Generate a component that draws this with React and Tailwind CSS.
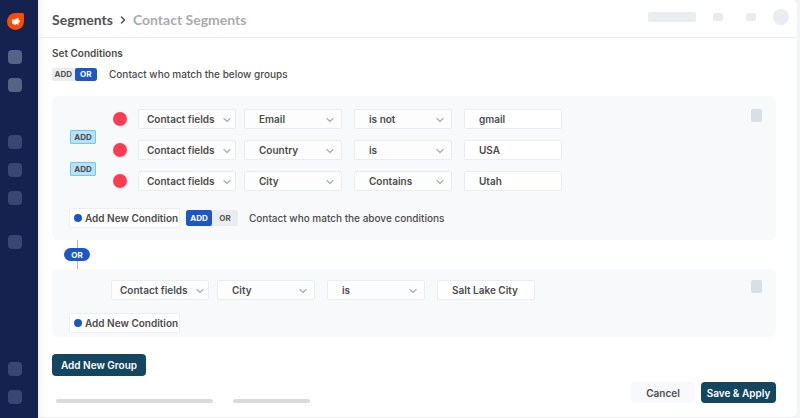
import { ChevronDown, ChevronRight } from "lucide-react"
import clsx from "clsx"

const conditions = [
  { field: "Email", operator: "is not", value: "gmail" },
  { field: "Country", operator: "is", value: "USA" },
  { field: "City", operator: "Contains", value: "Utah" },
]

function Logo() {
  return (
    <svg viewBox="0 0 17 17" className="w-[17px] h-[17px]" aria-hidden="true">
      <path d="M8.5 0H15.5Q17 0 17 1.5V8.5A8.5 8.5 0 1 1 8.5 0Z" fill="#fc4c02" />
      <path
        d="M5 6.6H8L11.4 4.6V6.9L12.9 7.6V9.2L11.4 9.8V12L8.9 10.8V11.8H6.9L6.4 10.4H5Z"
        fill="#fff"
      />
    </svg>
  )
}

function NavItem({ active }) {
  return (
    <a
      href="#"
      aria-label="Navigation item"
      className={clsx("block w-3.5 h-3.5 rounded-sm", active ? "bg-[#566286]" : "bg-[#384670]")}
    />
  )
}

function Sidebar() {
  return (
    <nav className="w-[38px] shrink-0 bg-[#15224f] flex flex-col justify-between pt-[13px] pb-3.5 pl-2">
      <div className="flex flex-col">
        <div className="-ml-px">
          <Logo />
        </div>
        <div className="mt-5 flex flex-col gap-3.5">
          <NavItem active />
          <NavItem active />
        </div>
        <div className="mt-[43px] flex flex-col gap-3.5">
          <NavItem />
          <NavItem />
          <NavItem />
        </div>
        <div className="mt-[30px]">
          <NavItem />
        </div>
      </div>
      <div className="flex flex-col gap-3.5">
        <NavItem />
        <NavItem />
      </div>
    </nav>
  )
}

function Header() {
  return (
    <header className="h-[38px] border-b border-[#e8eaec] flex items-center justify-between pl-3.5 pr-2">
      <div className="flex items-center pt-0.5 font-['Lato',sans-serif] text-sm font-bold">
        <a href="#" className="text-[#505050]">Segments</a>
        <ChevronRight className="w-3 h-3 mx-1 text-[#505050]" strokeWidth={3} />
        <span className="text-[#ababab]">Contact Segments</span>
      </div>
      <div className="flex items-center -mt-1">
        <div className="w-12 h-2.5 rounded-xs bg-[#e9edf0]" />
        <div className="ml-[17px] w-2.5 h-2 rounded-xs bg-[#ebebeb]" />
        <div className="ml-[23px] w-2.5 h-2 rounded-xs bg-[#ebebeb]" />
        <div className="ml-[17px] w-4 h-4 rounded-full bg-[#e9edf0]" />
      </div>
    </header>
  )
}

function Toggle({ selected, className }) {
  return (
    <div className={clsx("flex bg-[#e9edf0] rounded-xs overflow-hidden text-[8px] leading-3 font-bold", className)}>
      {["ADD", "OR"].map((option) => (
        <button
          key={option}
          type="button"
          aria-pressed={option === selected}
          className={clsx(
            "flex-1",
            option === selected ? "bg-[#1d57c5] text-white rounded-xs" : "text-[#555]",
          )}
        >
          {option}
        </button>
      ))}
    </div>
  )
}

function Select({ label, value, first }) {
  return (
    <div className="relative w-[98px] h-5">
      <select
        aria-label={label}
        defaultValue={value}
        className={clsx(
          "appearance-none w-full h-full bg-[#fdfdfd] border border-[#e9edf0] rounded-xs",
          first ? "pl-2" : "pl-3.5",
        )}
      >
        <option>{value}</option>
      </select>
      <ChevronDown
        className={clsx(
          "absolute top-[5px] w-3 h-3 text-[#b0b0b0] pointer-events-none",
          first ? "right-[3px]" : "right-1.5",
        )}
        strokeWidth={2.5}
      />
    </div>
  )
}

function Condition({ field, operator, value }) {
  return (
    <div className="flex items-center gap-3">
      <div className="flex gap-2">
        <Select label="Source" value="Contact fields" first />
        <Select label="Field" value={field} />
      </div>
      <Select label="Operator" value={operator} />
      <input
        aria-label="Value"
        defaultValue={value}
        className="w-[98px] h-5 bg-white border border-[#e9edf0] rounded-xs pl-3.5"
      />
    </div>
  )
}

function JoinBadge() {
  return (
    <button
      type="button"
      className="w-[26px] h-3.5 flex items-center justify-center bg-[#bce0fa] border border-[#69cdf3] rounded-[1px] text-[8px] font-bold"
    >
      ADD
    </button>
  )
}

function AddCondition() {
  return (
    <button
      type="button"
      className="w-[111px] h-5 flex items-center gap-[3px] pl-1 bg-white border border-[#eceff1] rounded-xs whitespace-nowrap"
    >
      <span className="w-2 h-2 shrink-0 rounded-full bg-[#1d57c5]" />
      Add New Condition
    </button>
  )
}

function DeleteButton() {
  return <button type="button" aria-label="Delete group" className="w-[11px] h-[13px] rounded-xs bg-[#d9dfe6]" />
}

export default function App() {
  return (
    <div className="min-h-screen flex bg-[#f3f4f5] font-['Inter',sans-serif] text-[10px] leading-4 font-semibold text-[#4c4c4c]">
      <Sidebar />
      <div className="flex-1 min-w-0 mr-[3px] bg-white border-b border-[#eeeeee] rounded-r-md shadow-[inset_10px_0_8px_-8px_#00000012]">
        <Header />
        <main className="pl-3.5 pr-[21px]">
          <h1 className="pt-[7px]">Set Conditions</h1>
          <div className="mt-[5px] flex items-center gap-3">
            <Toggle selected="OR" className="w-[45px] h-[13px]" />
            <p className="font-medium">Contact who match the below groups</p>
          </div>

          <section className="mt-3.5 h-36 rounded-md bg-[#f8f9fb] pt-[13px] pl-[17px] pr-3.5">
            <div className="flex items-start">
              <div className="flex flex-col gap-[18px] pt-[21px] pl-px">
                <JoinBadge />
                <JoinBadge />
              </div>
              <div className="ml-[17px] flex flex-col gap-[11px]">
                {conditions.map((condition) => (
                  <div key={condition.field} className="flex items-center gap-[11px]">
                    <span className="w-3.5 h-3.5 rounded-full bg-[#ff3b52]" />
                    <Condition {...condition} />
                  </div>
                ))}
              </div>
              <div className="ml-auto">
                <DeleteButton />
              </div>
            </div>
            <div className="mt-[17px] flex items-center">
              <AddCondition />
              <Toggle selected="ADD" className="ml-1.5 w-[52px] h-4" />
              <p className="ml-[11px] font-medium">Contact who match the above conditions</p>
            </div>
          </section>

          <div className="ml-3 w-[26px] flex flex-col items-center">
            <span className="w-px h-2 bg-[#b5b8bc]" />
            <span className="w-full h-[13px] flex items-center justify-center rounded-full bg-[#1d57c5] text-white text-[8px] font-bold">
              OR
            </span>
            <span className="w-px h-2 bg-[#b5b8bc]" />
          </div>

          <section className="rounded-md bg-[#f8f9fb] pt-[11px] pb-1 pl-[17px] pr-3.5">
            <div className="flex items-start justify-between pl-[42px]">
              <Condition field="City" operator="is" value="Salt Lake City" />
              <DeleteButton />
            </div>
            <div className="mt-[13px]">
              <AddCondition />
            </div>
          </section>

          <footer className="mt-[17px] flex items-end justify-between">
            <div>
              <button type="button" className="w-[94px] h-[22px] rounded-sm bg-[#14465f] text-white">
                Add New Group
              </button>
              <div className="mt-[23px] ml-1 flex gap-5">
                <div className="w-[157px] h-1 rounded-full bg-[#dadada]" />
                <div className="w-[77px] h-1 rounded-full bg-[#dadada]" />
              </div>
            </div>
            <div className="flex gap-1.5">
              <button type="button" className="w-16 h-[21px] rounded-sm bg-[#f8f9fb]">
                Cancel
              </button>
              <button type="button" className="w-[75px] h-[21px] rounded-sm bg-[#14465f] text-white">
                Save &amp; Apply
              </button>
            </div>
          </footer>
        </main>
      </div>
    </div>
  )
}
